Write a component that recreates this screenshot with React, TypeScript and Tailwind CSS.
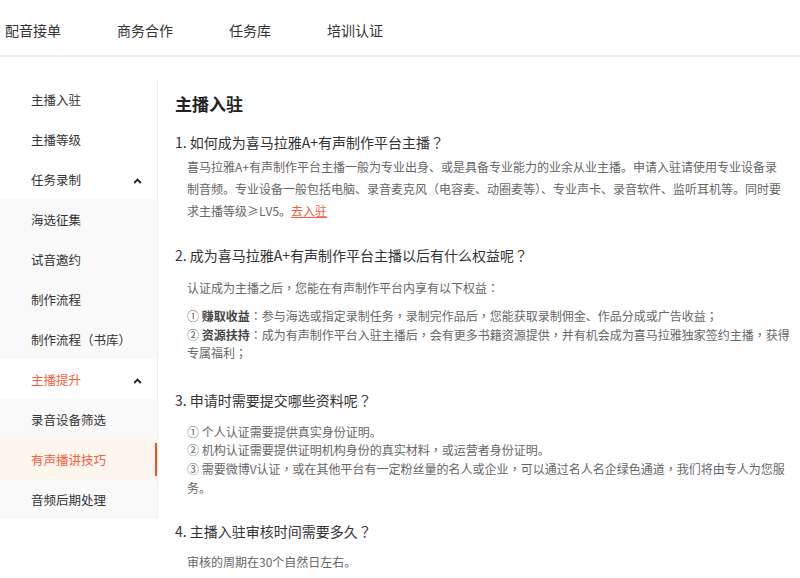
import type { ReactNode } from "react";

const font = { fontFamily: '"Microsoft YaHei", "Noto Sans CJK SC", sans-serif' };
const punctFont = { fontFamily: '"Noto Sans CJK TC", "Noto Sans CJK SC", sans-serif' };

const NAV = ["配音接单", "商务合作", "任务库", "培训认证"];

type MenuItem = { label: string; sub?: boolean; active?: boolean; group?: boolean; groupActive?: boolean };

const MENU: MenuItem[] = [
  { label: "主播入驻" },
  { label: "主播等级" },
  { label: "任务录制", group: true },
  { label: "海选征集", sub: true },
  { label: "试音邀约", sub: true },
  { label: "制作流程", sub: true },
  { label: "制作流程（书库）", sub: true },
  { label: "主播提升", group: true, groupActive: true },
  { label: "录音设备筛选", sub: true },
  { label: "有声播讲技巧", sub: true, active: true },
  { label: "音频后期处理", sub: true },
];

// centred full-width punctuation, like the YaHei rendering in the screenshot
function T({ children }: { children: string }) {
  const parts = children.split(/([，：；（）？])/);
  return (
    <>
      {parts.map((p, i) =>
        i % 2 === 1 ? (
          <span key={i} style={punctFont}>
            {p}
          </span>
        ) : (
          p
        ),
      )}
    </>
  );
}

function Chevron() {
  return (
    <svg width="9" height="6" viewBox="0 0 9 6" className="mr-[15px]">
      <path d="M1.2 5 L4.5 1.6 L7.8 5" fill="none" stroke="#222" strokeWidth="1.8" />
    </svg>
  );
}

function SideItem({ item }: { item: MenuItem }) {
  const bg = item.active ? "bg-[#fff5ef]" : item.sub ? "bg-[#f9f9f9]" : "bg-white";
  const color = item.active || item.groupActive ? "text-[#f5603e]" : "text-[#333]";
  return (
    <div className={`relative flex h-10 items-center justify-between pl-[31px] pt-[3px] text-[12.5px] ${bg} ${color}`}>
      <span>
        <T>{item.label}</T>
      </span>
      {item.group ? <Chevron /> : null}
      {item.active ? <span className="absolute right-0 top-[4px] h-[33px] w-[2px] bg-[#f5501f]" /> : null}
    </div>
  );
}

function Question({ text, className = "" }: { text: string; className?: string }) {
  return (
    <h3 className={`text-[14px] leading-6 text-[#333] ${className}`}>
      <T>{text}</T>
    </h3>
  );
}

function Lines({ lines, lh, className = "" }: { lines: ReactNode[]; lh: string; className?: string }) {
  return (
    <div className={`pl-3 text-[12px] text-[#666] whitespace-nowrap ${lh} ${className}`}>
      {lines.map((l, i) => (
        <div key={i}>{typeof l === "string" ? <T>{l}</T> : l}</div>
      ))}
    </div>
  );
}

export default function App() {
  return (
    <div className="min-h-[578px] w-[800px] overflow-hidden bg-white" style={font}>
      <header className="flex h-[57px] items-center gap-14 border-b-2 border-[#f0f0f0] pl-[5px] pt-[6px] text-[14px] text-[#333]">
        {NAV.map((n) => (
          <span key={n}>{n}</span>
        ))}
      </header>

      <div className="flex pt-[22px]">
        <aside className="w-[158px] shrink-0 self-start border-r border-[#efefef]">
          {MENU.map((m) => (
            <SideItem key={m.label} item={m} />
          ))}
        </aside>

        <main className="flex-1 pl-[17px] pt-[2px]">
          <h2 className="mt-[11px] text-[17px] font-bold leading-6 text-[#222]">主播入驻</h2>

          <Question className="mt-[14px]" text="1. 如何成为喜马拉雅A+有声制作平台主播？" />
          <Lines
            lh="leading-[22px]"
            className="mt-[2px]"
            lines={[
              "喜马拉雅A+有声制作平台主播一般为专业出身、或是具备专业能力的业余从业主播。申请入驻请使用专业设备录",
              "制音频。专业设备一般包括电脑、录音麦克风（电容麦、动圈麦等）、专业声卡、录音软件、监听耳机等。同时要",
              <>
                求主播等级≥LV5。<a className="text-[#f5603e] underline">去入驻</a>
              </>,
            ]}
          />

          <Question className="mt-[21px]" text="2. 成为喜马拉雅A+有声制作平台主播以后有什么权益呢？" />
          <Lines lh="leading-[22px]" className="mt-[10px]" lines={["认证成为主播之后，您能在有声制作平台内享有以下权益："]} />
          <Lines
            lh="leading-[18.5px]"
            className="mt-[8px]"
            lines={[
              <>
                ① <b className="text-[#444]">赚取收益</b>
                <T>：参与海选或指定录制任务，录制完作品后，您能获取录制佣金、作品分成或广告收益；</T>
              </>,
              <>
                ② <b className="text-[#444]">资源扶持</b>
                <T>：成为有声制作平台入驻主播后，会有更多书籍资源提供，并有机会成为喜马拉雅独家签约主播，获得</T>
              </>,
              "专属福利；",
            ]}
          />

          <Question className="mt-[25px]" text="3. 申请时需要提交哪些资料呢？" />
          <Lines
            lh="leading-[18.7px]"
            className="mt-[11px]"
            lines={[
              "① 个人认证需要提供真实身份证明。",
              "② 机构认证需要提供证明机构身份的真实材料，或运营者身份证明。",
              "③ 需要微博V认证，或在其他平台有一定粉丝量的名人或企业，可以通过名人名企绿色通道，我们将由专人为您服",
              "务。",
            ]}
          />

          <Question className="mt-[22px]" text="4. 主播入驻审核时间需要多久？" />
          <Lines lh="leading-[22px]" className="mt-[8px]" lines={["审核的周期在30个自然日左右。"]} />
        </main>
      </div>
    </div>
  );
}
